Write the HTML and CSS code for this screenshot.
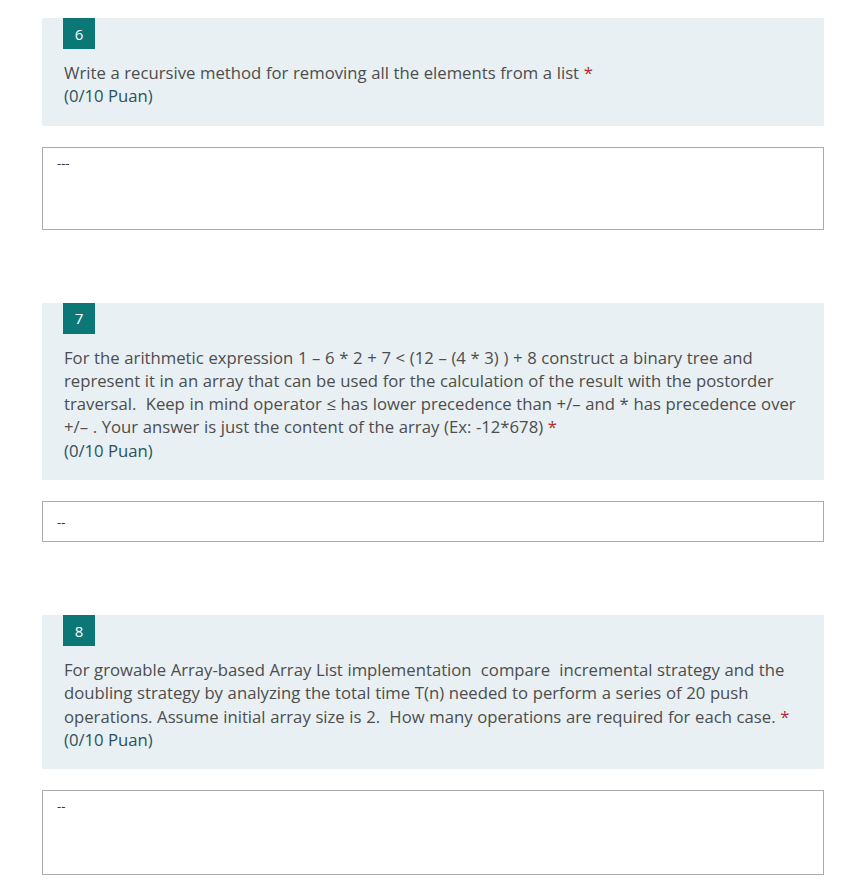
FILE: index.html
```html
<!DOCTYPE html>
<html>
<head>
<meta charset="utf-8">
<link rel="stylesheet" href="styles.css">
</head>
<body>
<div class="form">
  <section class="question">
    <div class="card">
      <div class="badge">6</div>
      <div class="title">Write a recursive method for removing all the elements from a list <span class="req">*</span></div>
      <div class="points">(0/10 Puan)</div>
    </div>
    <div class="answer tall">---</div>
  </section>

  <section class="question">
    <div class="card">
      <div class="badge">7</div>
      <div class="title">For the arithmetic expression 1 – 6 * 2 + 7 &lt; (12 – (4 * 3) ) + 8 construct a binary tree and represent it in an array that can be used for the calculation of the result with the postorder traversal.&nbsp; Keep in mind operator ≤ has lower precedence than +/– and * has precedence over +/– . Your answer is just the content of the array (Ex: -12*678) <span class="req">*</span></div>
      <div class="points">(0/10 Puan)</div>
    </div>
    <div class="answer short">--</div>
  </section>

  <section class="question">
    <div class="card">
      <div class="badge">8</div>
      <div class="title">For growable Array-based Array List implementation&nbsp; compare&nbsp; incremental strategy and the doubling strategy by analyzing the total time T(n) needed to perform a series of 20 push operations. Assume initial array size is 2.&nbsp; How many operations are required for each case. <span class="req">*</span></div>
      <div class="points">(0/10 Puan)</div>
    </div>
    <div class="answer tall3">--</div>
  </section>
</div>
</body>
</html>
```

FILE: styles.css
```css
html, body {
  margin: 0;
  padding: 0;
  background: #ffffff;
}
body {
  font-family: "Open Sans", "Noto Sans", sans-serif;
  color: #4d4d4d;
}
.form {
  margin: 18px 37px 0 42px;
  display: flex;
  flex-direction: column;
  gap: 73px;
}
.question {
  display: flex;
  flex-direction: column;
  gap: 21px;
}
.card {
  background: #e8f0f3;
  padding: 0 3px 18px 21px;
}
.badge {
  width: 32px;
  height: 31px;
  background: #0b7777;
  color: #ffffff;
  font-size: 15px;
  display: flex;
  align-items: center;
  justify-content: center;
  margin-bottom: 12px;
}
.title {
  font-size: 16.7px;
  line-height: 23.3px;
  padding-left: 1px;
  word-spacing: 0.3px;
}
.req {
  color: #b4262c;
}
.points {
  font-size: 16.7px;
  line-height: 23.3px;
  color: #2a5260;
  padding-left: 1px;
}
.answer {
  border: 1px solid #ababab;
  background: #ffffff;
  box-sizing: border-box;
  padding: 6px 14px;
  font-size: 13px;
  color: #333333;
}
.tall { height: 83px; }
.short { height: 41px; padding-top: 11px; }
.tall3 { height: 85px; }
```
